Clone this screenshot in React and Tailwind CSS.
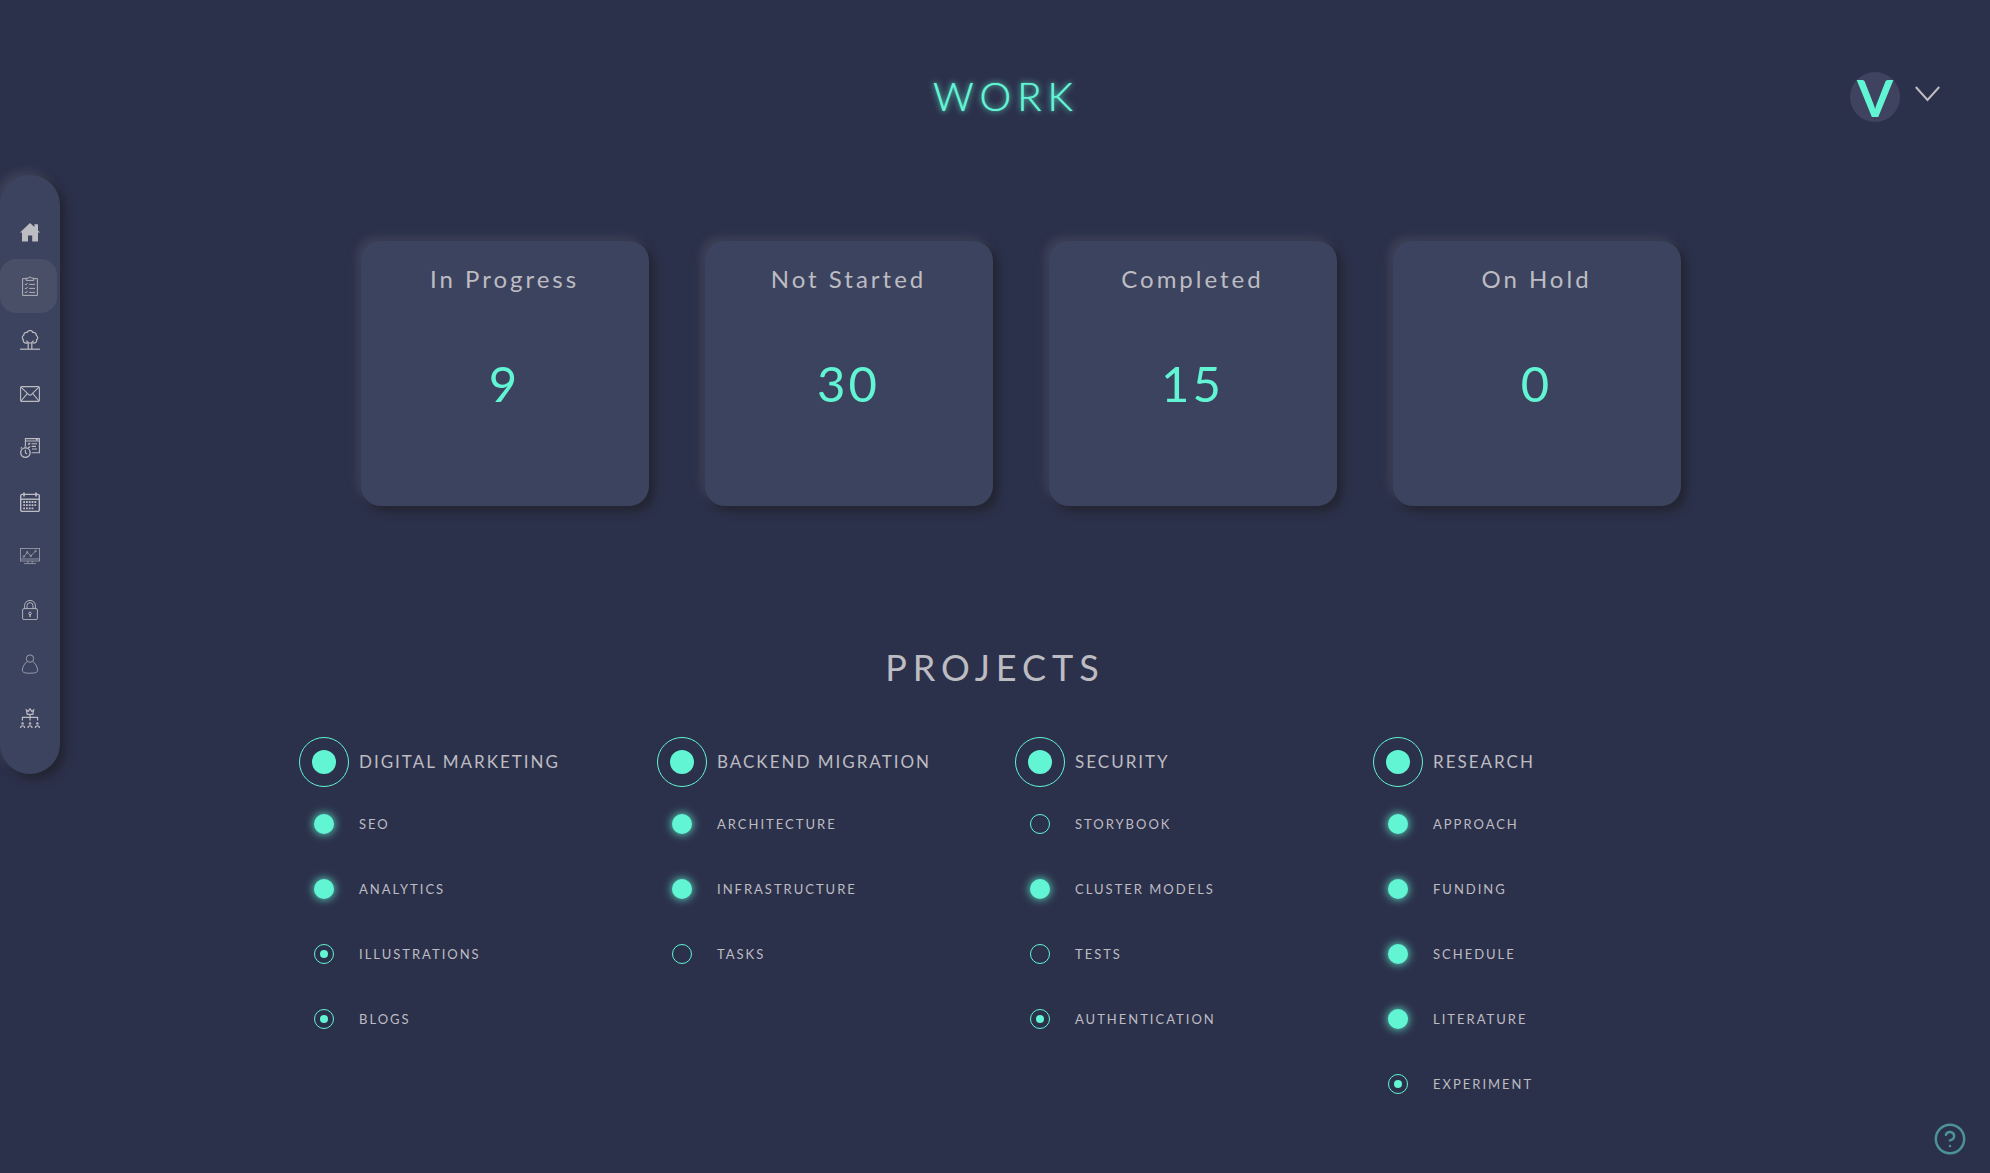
import React, { useState } from 'react';
import { CircleQuestionMark } from 'lucide-react';

const HomeIcon = () => (
  <svg viewBox="0 0 20 20" className="w-5 h-5" fill="currentColor">
    <path d="M10 1 L14.4 5 V2.2 H18 V8.4 L20 10.4 H18 V19.6 H12.2 V13.6 H8 V19.6 H2 V10.4 H0 Z" />
  </svg>
);

const ClipboardIcon = () => (
  <svg viewBox="0 0 20 20" className="w-5 h-5" fill="none" stroke="currentColor" strokeWidth="0.9">
    <path d="M6.2 2.6 H2.6 V19.4 H17.4 V2.6 H13.8" />
    <path d="M6.2 4.4 V2.2 H8.4 A1.7 1.7 0 0 1 11.6 2.2 H13.8 V4.4 Z" />
    <path d="M4.8 8 l1 1 1.8-2 M4.8 12 l1 1 1.8-2 M4.8 16 l1 1 1.8-2 M9.2 8.4 H15 M9.2 12.4 H15 M9.2 16.4 H15" />
  </svg>
);

const TreeIcon = () => (
  <svg viewBox="0 0 20 20" className="w-5 h-5" fill="none" stroke="currentColor" strokeWidth="1.2">
    <path d="M7.6 12.6 C5 14 2.8 12 3.4 9.8 C1.8 8.4 2 6 3.8 5.2 C3.8 3 5.6 2 7.2 2.4 C8.4 -0.2 12 -0.2 12.8 2.4 C14.6 2 16.4 3.2 16.2 5.2 C18 6.2 18.2 8.6 16.6 9.8 C17 12.2 15 13.8 12.4 12.6" />
    <path d="M8.2 19 V12.4 L6.4 10.6 M11.8 19 V12.4 L13.6 10.6 M8.6 13 H11.4" />
    <path d="M0 19.2 H20" />
  </svg>
);

const MailIcon = () => (
  <svg viewBox="0 0 20 20" className="w-5 h-5" fill="none" stroke="currentColor" strokeWidth="1.1">
    <rect x="0.6" y="2.6" width="18.8" height="14.8" rx="1.2" />
    <path d="M1 3.2 L9 10.8 Q10 11.6 11 10.8 L19 3.2 M1 17 L7.2 9.6 M19 17 L12.8 9.6" />
  </svg>
);

const TimesheetIcon = () => (
  <svg viewBox="0 0 20 20" className="w-5 h-5" fill="none" stroke="currentColor" strokeWidth="1.1">
    <path d="M5.4 8 V0.6 H19.4 V14.8 H11.6 M5.4 3 H19.4 M16 1.8 H17.8" />
    <path d="M8 5.6 l0.8 0.8 1.4-1.4 M8 9 l0.8 0.8 1.4-1.4 M11.6 5.8 H17 M11.6 8.4 H16 M12 11 H17" />
    <circle cx="5.4" cy="14.6" r="4.7" strokeWidth="1.3" />
    <path d="M5.4 11.8 V14.8 L7 16 M4.2 9 H6.6 M0.6 10.4 L2 9.4" />
  </svg>
);

const CalendarIcon = () => (
  <svg viewBox="0 0 20 20" className="w-5 h-5" fill="none" stroke="currentColor" strokeWidth="1.4">
    <rect x="0.7" y="2.4" width="18.6" height="17" rx="1.4" />
    <path d="M0.7 7.2 H19.3" />
    <path d="M4 0.4 V4.4 M16 0.4 V4.4" strokeWidth="1.7" />
    <path d="M3.2 10 H17 M3.2 13.2 H17 M3.2 16.4 H14" strokeWidth="1.8" strokeDasharray="1.8 1" />
  </svg>
);

const MonitorIcon = () => (
  <svg viewBox="0 0 20 20" className="w-5 h-5 opacity-80" fill="none" stroke="currentColor" strokeWidth="0.8">
    <rect x="0.4" y="2.4" width="19.2" height="12.6" />
    <path d="M0.4 13 H19.6 M7.8 15 V17 M12.2 15 V17 M4 17.6 H16" />
    <path d="M4 10.6 L7.2 6.4 L10.8 10 L15.4 5.2" />
    <circle cx="3.8" cy="10.6" r="0.8" />
    <circle cx="7.2" cy="6.2" r="0.8" />
    <circle cx="10.8" cy="10" r="0.8" />
    <circle cx="15.6" cy="5" r="0.8" />
  </svg>
);

const LockIcon = () => (
  <svg viewBox="0 0 20 20" className="w-5 h-5" fill="none" stroke="currentColor" strokeWidth="0.9">
    <rect x="2.6" y="8.6" width="14.8" height="11" rx="1.4" />
    <path d="M4.6 8.6 V5.4 A5.4 5 0 0 1 15.4 5.4 V8.6 M7 8.6 V5.8 A3 3.2 0 0 1 13 5.8 V8.6" />
    <path d="M10 14 V17" strokeWidth="1.3" />
    <circle cx="10" cy="13.4" r="1.3" />
  </svg>
);

const UserIcon = () => (
  <svg viewBox="0 0 20 20" className="w-5 h-5 opacity-80" fill="none" stroke="currentColor" strokeWidth="0.9">
    <circle cx="10" cy="4.6" r="3.7" />
    <path d="M7.2 7.6 C4.4 9.4 2.4 13 2.4 16.4 C2.4 18.4 4.6 19.2 10 19.2 S17.6 18.4 17.6 16.4 C17.6 13 15.6 9.4 12.8 7.6" />
  </svg>
);

const TeamIcon = () => (
  <svg viewBox="0 0 20 20" className="w-5 h-5" fill="none" stroke="currentColor" strokeWidth="1.2">
    <path d="M6.4 2 L8.2 3.4 L10 0.8 L11.8 3.4 L13.6 2 L12.8 6.4 H7.2 Z" />
    <path d="M10 6.4 V12.4 M2.4 12.4 V9.4 H17.6 V12.4" />
    <path d="M0.6 20 C0.6 17 4.6 17 4.6 20 M8 20 C8 17 12 17 12 20 M15.4 20 C15.4 17 19.4 17 19.4 20" />
    <circle cx="2.6" cy="15.4" r="1.2" fill="currentColor" stroke="none" />
    <circle cx="10" cy="15.4" r="1.2" fill="currentColor" stroke="none" />
    <circle cx="17.4" cy="15.4" r="1.2" fill="currentColor" stroke="none" />
  </svg>
);

const navItems = [
  { label: 'Home', icon: <HomeIcon /> },
  { label: 'Work', icon: <ClipboardIcon /> },
  { label: 'Tree', icon: <TreeIcon /> },
  { label: 'Mail', icon: <MailIcon /> },
  { label: 'Timesheet', icon: <TimesheetIcon /> },
  { label: 'Calendar', icon: <CalendarIcon /> },
  { label: 'Analytics', icon: <MonitorIcon /> },
  { label: 'Security', icon: <LockIcon /> },
  { label: 'Profile', icon: <UserIcon /> },
  { label: 'Team', icon: <TeamIcon /> },
];

const statCards = [
  { label: 'In Progress', value: 9 },
  { label: 'Not Started', value: 30 },
  { label: 'Completed', value: 15 },
  { label: 'On Hold', value: 0 },
];

const projects = [
  {
    name: 'DIGITAL MARKETING',
    tasks: [
      { name: 'SEO', status: 'done' },
      { name: 'ANALYTICS', status: 'done' },
      { name: 'ILLUSTRATIONS', status: 'active' },
      { name: 'BLOGS', status: 'active' },
    ],
  },
  {
    name: 'BACKEND MIGRATION',
    tasks: [
      { name: 'ARCHITECTURE', status: 'done' },
      { name: 'INFRASTRUCTURE', status: 'done' },
      { name: 'TASKS', status: 'open' },
    ],
  },
  {
    name: 'SECURITY',
    tasks: [
      { name: 'STORYBOOK', status: 'open' },
      { name: 'CLUSTER MODELS', status: 'done' },
      { name: 'TESTS', status: 'open' },
      { name: 'AUTHENTICATION', status: 'active' },
    ],
  },
  {
    name: 'RESEARCH',
    tasks: [
      { name: 'APPROACH', status: 'done' },
      { name: 'FUNDING', status: 'done' },
      { name: 'SCHEDULE', status: 'done' },
      { name: 'LITERATURE', status: 'done' },
      { name: 'EXPERIMENT', status: 'active' },
    ],
  },
];

const StatusDot = ({ status }) => {
  if (status === 'done') {
    return <span className="w-5 h-5 rounded-full bg-[#61f5d4] shadow-[0_0_10px_#61f5d4]" />;
  }
  return (
    <span className="w-5 h-5 rounded-full border border-[#61f5d4] flex items-center justify-center">
      {status === 'active' && <span className="w-2 h-2 rounded-full bg-[#61f5d4]" />}
    </span>
  );
};

const Sidebar = ({ active, onSelect }) => (
  <nav className="w-[60px] shrink-0 self-start mt-[175px] pt-[30px] pb-[29px] rounded-[30px] bg-[#3c435f] shadow-[5px_5px_10px_#22242f,-4px_-4px_8px_#40445a]">
    {navItems.map(item => (
      <a
        key={item.label}
        href="#"
        aria-label={item.label}
        onClick={() => onSelect(item.label)}
        className={`h-[54px] w-[57px] pl-[3px] flex items-center justify-center rounded-2xl ${active === item.label ? 'bg-[#4a4f68]' : ''}`}
      >
        {item.icon}
      </a>
    ))}
  </nav>
);

const Project = ({ project }) => (
  <div>
    <div className="flex items-center gap-[10px] h-[50px]">
      <span className="w-[50px] h-[50px] shrink-0 rounded-full border border-[#61f5d4] flex items-center justify-center">
        <span className="w-6 h-6 rounded-full bg-[#61f5d4]" />
      </span>
      <h3 className="text-[17px] leading-6 tracking-[2px] whitespace-nowrap">{project.name}</h3>
    </div>
    <ul className="mt-1">
      {project.tasks.map(task => (
        <li key={task.name} className="flex items-center gap-[10px] h-[65px]">
          <span className="w-[50px] flex justify-center">
            <StatusDot status={task.status} />
          </span>
          <span className="text-[13px] leading-5 tracking-[2px]">{task.name}</span>
        </li>
      ))}
    </ul>
  </div>
);

const App = () => {
  const [active, setActive] = useState('Work');

  return (
    <div className="min-h-screen flex bg-[#2c314b] text-[#bdbcc2] font-['Lato',sans-serif] font-normal">
      <Sidebar active={active} onSelect={setActive} />
      <main className="flex-1 pt-[72px]">
        <header className="grid grid-cols-[1fr_auto_1fr] items-center h-[50px] pl-3 pr-[50px]">
          <h1 className="col-start-2 pb-[2px] text-[40px] leading-[48px] font-light tracking-[6px] text-[#61f5d4] [text-shadow:0_0_1px_#61f5d4,0_0_6px_#61f5d4]">
            WORK
          </h1>
          <button className="justify-self-end flex items-center gap-[15px]" aria-label="Account menu">
            <span className="w-[50px] h-[50px] rounded-full bg-[#3f4360] flex items-center justify-center text-[52px] leading-[60px] font-bold text-[#61f5d4]">
              V
            </span>
            <svg viewBox="0 0 25 16" className="w-[25px] h-4 mb-[6px]" fill="none" stroke="currentColor" strokeWidth="2">
              <path d="M0.8 1 L12.5 14 L24.2 1" />
            </svg>
          </button>
        </header>

        {/* Stat cards */}
        <section className="flex justify-center gap-14 mt-[119px] pl-[51px] pr-[60px]">
          {statCards.map(card => (
            <div
              key={card.label}
              className="w-72 h-[265px] pt-[22px] text-center rounded-[20px] bg-[#3c435f] shadow-[5px_5px_10px_#22242f,-4px_-4px_8px_#40445a]"
            >
              <h2 className="text-[24px] leading-8 tracking-[3px]">{card.label}</h2>
              <p className="mt-[58px] text-[49px] leading-[60px] tracking-[3px] text-[#61f5d4]">{card.value}</p>
            </div>
          ))}
        </section>

        {/* Projects */}
        <section className="mt-[141px] pb-10">
          <h2 className="text-[36px] leading-10 tracking-[6px] text-center pr-[60px]">PROJECTS</h2>
          <div className="grid grid-cols-4 mt-[50px] pl-[239px] pr-[259px]">
            {projects.map(project => (
              <Project key={project.name} project={project} />
            ))}
          </div>
        </section>
      </main>

      <button className="fixed right-[23px] bottom-[17px] text-[#4c9299]" aria-label="Help">
        <CircleQuestionMark className="w-[34px] h-[34px]" strokeWidth={1.75} />
      </button>
    </div>
  );
};

export default App;
